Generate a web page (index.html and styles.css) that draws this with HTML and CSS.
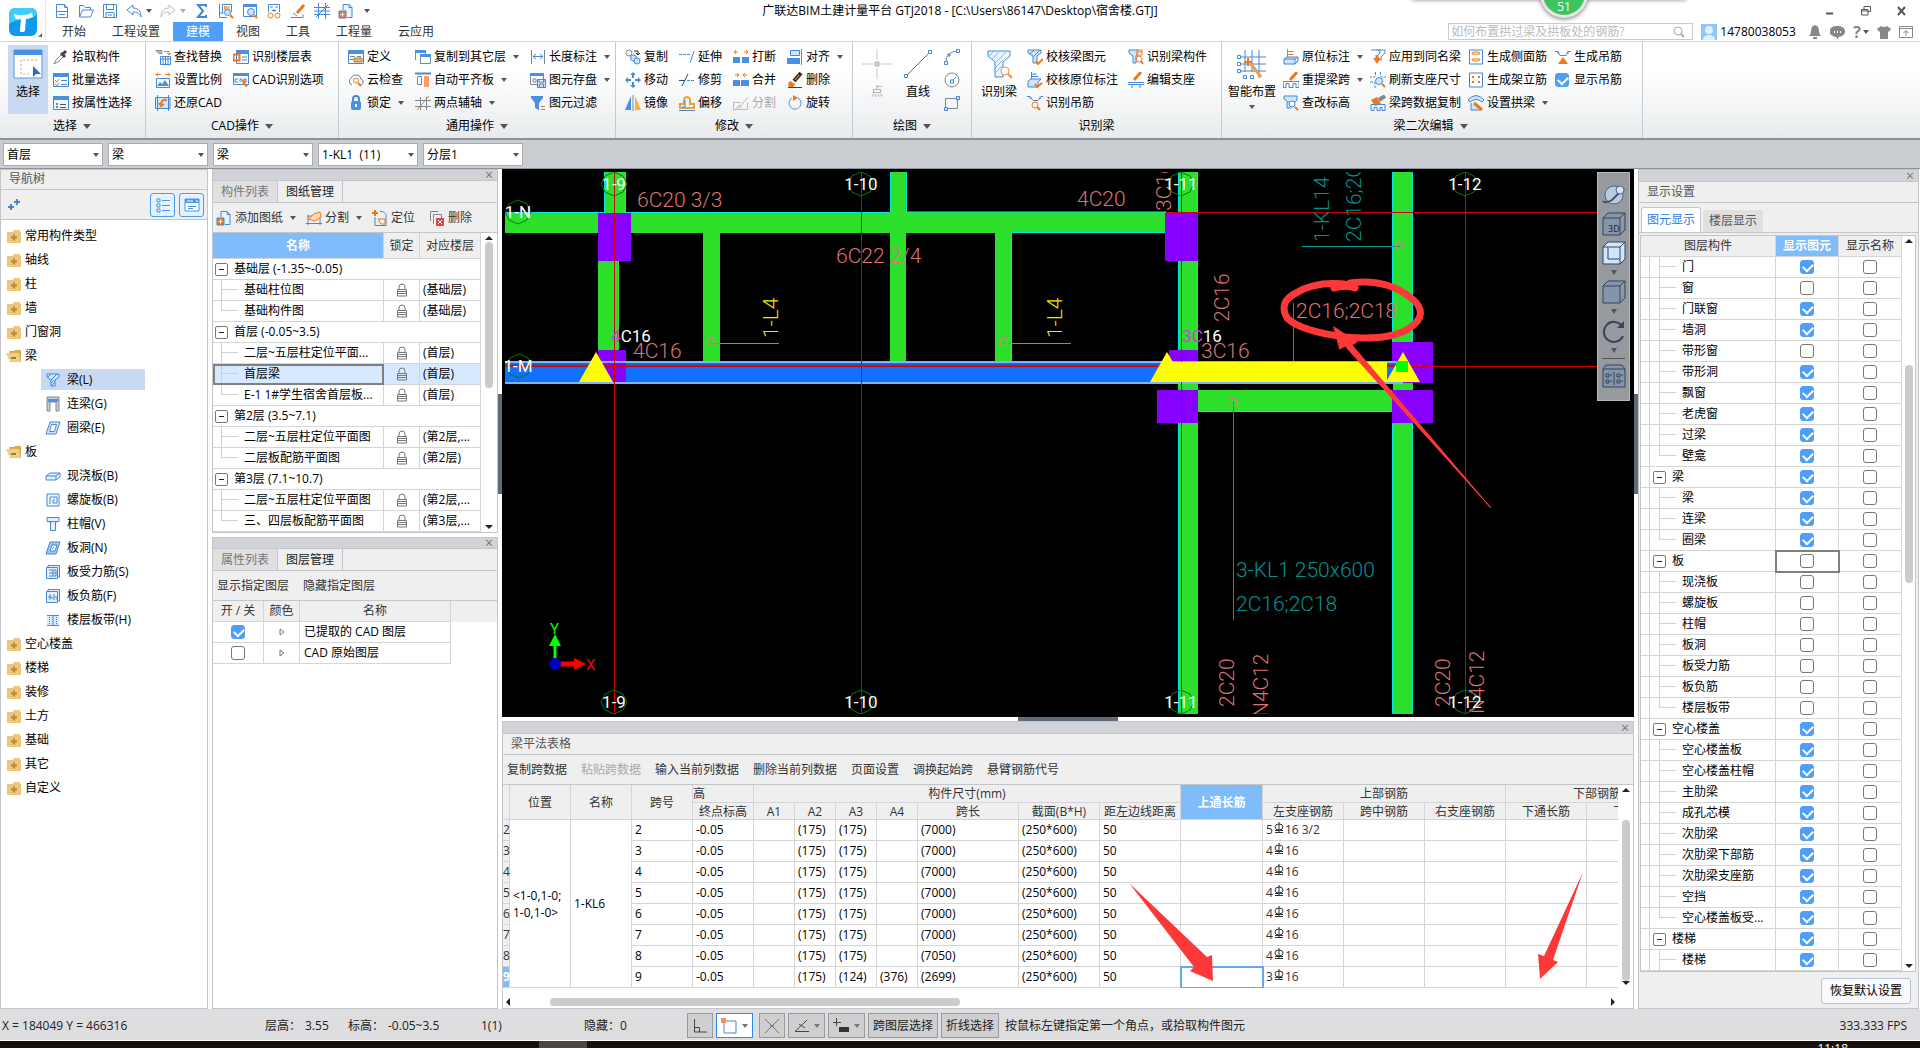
FILE: index.html
```html
<!DOCTYPE html>
<html lang="zh-CN">
<head>
  <meta charset="utf-8">
  <title>广联达BIM土建计量平台 GTJ2018</title>
  <link rel="stylesheet" href="styles.css">
</head>
<body>
  <svg class="defs" aria-hidden="true">
    <symbol id="i-lock" viewBox="0 0 12 14"><path d="M3 6V4a3 3 0 0 1 6 0v2M1.500 6.500h9v6.500h-9zM1.500 8.500h9M1.500 10.500h9" fill="none" stroke="#777"/></symbol>
    <symbol id="i-folder" viewBox="0 0 16 14"><path d="M1 3h6l1-2h6v2h1v11H1z" fill="#edc67b"/><path d="M8 5.500v6M5 8.500h6" stroke="#b98c37" stroke-width="2"/></symbol>
    <symbol id="i-open" viewBox="0 0 16 14"><path d="M3 2h5l1-1h6v12H5z" fill="#dba94d"/><path d="M0 4h13l2 9H4z" fill="#f2cd86"/><path d="M5 9h5" stroke="#a8761c" stroke-width="2"/></symbol>
    <symbol id="i-beam" viewBox="0 0 16 16"><path d="M2 2h12v3l-4 3v6H6V8L2 5zM3 5l3-3M6 8l6-6M6 11l3-3M6 14l4-4" fill="#cfe5ff" stroke="#4488d8"/></symbol>
    <symbol id="i-link" viewBox="0 0 16 16"><path d="M2 1h12v14h-3V6H5v9H2z" fill="#c8cdd3" stroke="#7d8791"/><path d="M3 3h10v3H3z" fill="#4a94ea"/></symbol>
    <symbol id="i-ring" viewBox="0 0 16 16"><path d="M5 2h10l-4 12H1zM6.500 4.500h5L9.500 11.500h-5z" fill="#cfe5ff" fill-rule="evenodd" stroke="#4488d8"/></symbol>
    <symbol id="i-slab" viewBox="0 0 16 16"><path d="M1 8l4-3h10l-4 3zM1 8v4h10V8M11 12l4-3V5" fill="#e1f0ff" stroke="#4488d8"/></symbol>
    <symbol id="i-spiral" viewBox="0 0 16 16"><path d="M2 2h12v12H2zM5 12V5h7v6H8V8h2" fill="#edf6ff" stroke="#4488d8"/></symbol>
    <symbol id="i-cap" viewBox="0 0 16 16"><path d="M2 1.500h12v4H2zM5.500 5.500v9h5v-9M4 5.500l2 2M12 5.500l-2 2" fill="#e1f0ff" stroke="#4488d8"/></symbol>
    <symbol id="i-hole" viewBox="0 0 16 16"><path d="M5 2h10l-4 12H1z" fill="#9dc6f7" stroke="#4488d8"/><path d="M7 5h5l-2 6H5zM7 9l2-2" fill="#fff" stroke="#4488d8"/></symbol>
    <symbol id="i-rebar" viewBox="0 0 16 16"><path d="M1.500 3.500h11v11h-11zM3 3V1.500h11.500V13H13M4 6h7v6H4M4 9h7M8 6v6" fill="#e4f1ff" stroke="#4488d8"/></symbol>
    <symbol id="i-neg" viewBox="0 0 16 16"><path d="M1.500 3.500h11v11h-11zM3 3V1.500h11.500V13H13M5 6v6M9 6v6M3 9h4v2M9 9h3v3" fill="#e4f1ff" stroke="#4488d8"/></symbol>
    <symbol id="i-band" viewBox="0 0 16 16"><path d="M2 3h12v11H2z" fill="#d6e9ff"/><path d="M2 3.500h12M2 13.500h12M8 3v10" fill="none" stroke="#4488d8"/><path d="M4.500 3v10M11.500 3v10" stroke="#4488d8" stroke-dasharray="1 1"/></symbol>
    <symbol id="i-bar" viewBox="0 0 12 12"><path d="M6 0v10M2 10.500h8M2 8.500h8M2 5a4 3 0 1 1 8 0a4 3 0 1 1-8 0" fill="none" stroke="#333"/></symbol>
    <symbol id="i-list" viewBox="0 0 16 16"><path d="M2 2h3v3H2zM2 7h3v3H2zM2 12h3v3H2zM7 3.500h8M7 8.500h8M7 13.500h8" fill="none" stroke="#4a96ee"/></symbol>
    <symbol id="i-panel" viewBox="0 0 16 16"><path d="M1 2h14v12H1z" fill="#fff" stroke="#4a96ee"/><path d="M1 2h14v4H1z" fill="#4a96ee"/><path d="M3 4h6M12 4h2" stroke="#fff"/><path d="M4 9.500h8M4 11.500h5" stroke="#4a96ee"/></symbol>
    <symbol id="i-adddoc" viewBox="0 0 16 16"><path d="M5 7V1.500h6l3 3v10H9M11 1.500v3h3" fill="#eaf4ff" stroke="#4488d8"/><path d="M1 8h7v7H1z" fill="#f07818"/><path d="M4.500 9.500v4M2.500 11.500h4" stroke="#fff"/></symbol>
  </svg>

  <header class="titlebar">
    <div class="logo">
      <svg width="30" height="30" viewBox="0 0 30 30"><rect x="1" y="1" width="28" height="28" rx="6" fill="#1199ee"/><path d="M1 17C9 11 22 13 29 8V7a6 6 0 0 0-6-6H7a6 6 0 0 0-6 6z" fill="#42cdf8"/><path d="M6 7q9 3 18-1l1 4q-4 2-7 2l-1 11q0 2-3 2t-2-2l1-11q-4 1-6-1z" fill="#fff"/></svg>
      <i class="corner"></i>
    </div>
    <div class="quick">
      <button aria-label="新建"><svg class="ico" viewBox="0 0 16 16"><path d="M2.500 1.500h8l3 3v10h-11zM10.500 1.500v3h3M3 8.500h10M5 11.500h6"/></svg></button>
      <button aria-label="打开"><svg class="ico" viewBox="0 0 16 16"><path d="M1.500 14V2.500h4l2 2h5V7M1.500 14l3-7h11l-3 7z"/></svg></button>
      <button aria-label="保存"><svg class="ico" viewBox="0 0 16 16"><path d="M1.500 1.500h13v13h-13zM4.500 1.500v5h7v-5M4 14.500v-5h8v5M6 12h4"/></svg></button>
      <button class="drop" aria-label="撤销"><svg class="ico" viewBox="0 0 16 16"><path d="M7 2L1 7l6 5V9c4 0 6 1 8 5c0-5-2-9-8-9z"/></svg><i class="caret"></i></button>
      <button class="drop off" aria-label="恢复"><svg class="ico" viewBox="0 0 16 16"><path d="M9 2l6 5l-6 5V9c-4 0-6 1-8 5c0-5 2-9 8-9z"/></svg><i class="caret"></i></button>
      <button aria-label="汇总"><svg class="ico" viewBox="0 0 16 16"><path d="M12 4V2H4l5 6l-5 6h8v-2" stroke-width="2"/></svg></button>
      <button aria-label="查看工程量"><svg class="ico" viewBox="0 0 16 16"><path d="M1.500 1v13.500H9M4.500 10V1.500h9V9M1.500 10h4"/><path class="o" d="M6 4h6M6 6h6M7 3v4"/><circle class="lt" cx="9.500" cy="9.500" r="3"/><path class="o" d="M12 12l3 3" stroke-width="2"/></svg></button>
      <button aria-label="查看计算式"><svg class="ico" viewBox="0 0 16 16"><path d="M1.500 1.500h13v12h-13z"/><path class="f" d="M1 1h14v3H1z"/><circle class="lt" cx="9" cy="9" r="3.500"/><path class="o" d="M12 12l3 3" stroke-width="2"/></svg></button>
      <button aria-label="表达式"><svg class="ico" viewBox="0 0 16 16"><path d="M2.500 9V1.500h11V9M4 4h3M9 4h3M8 6v3M6 7.500h4"/><circle class="o" cx="4.500" cy="12.500" r="2.500"/><circle class="o" cx="11.500" cy="12.500" r="2.500"/></svg></button>
      <button aria-label="标记"><svg class="ico" viewBox="0 0 16 16"><path class="o" d="M14 2L7 10" stroke-width="3"/><path d="M3 10l4 3M1 14.500h12v-3"/></svg></button>
      <button aria-label="轴网"><svg class="ico" viewBox="0 0 16 16"><path d="M4.500 0v16M11.500 0v16M0 4.500h16M0 11.500h16M2 14L14 2M0 8h16"/></svg></button>
      <button aria-label="添加图纸"><svg class="ico"><use href="#i-adddoc"/></svg></button>
      <button class="more" aria-label="更多"><i class="caret"></i></button>
    </div>
    <div class="app-title">广联达BIM土建计量平台 GTJ2018 - [C:\Users\86147\Desktop\宿舍楼.GTJ]</div>
    <div class="window-controls">
      <button aria-label="最小化"><svg width="12" height="12"><path d="M2 8.500h7" stroke="#555" stroke-width="2"/></svg></button>
      <button aria-label="还原"><svg width="12" height="12"><path d="M4 4V1.500h6.500v5H8M1.500 4.500H8V10H1.500zM1.500 6H8" fill="none" stroke="#555"/></svg></button>
      <button aria-label="关闭"><svg width="12" height="12"><path d="M2 2l7 8M9 2l-7 8" stroke="#555" stroke-width="2"/></svg></button>
    </div>
    <nav class="menu">
      <a href="#">开始</a><a href="#">工程设置</a><a href="#" class="active">建模</a><a href="#">视图</a><a href="#">工具</a><a href="#">工程量</a><a href="#">云应用</a>
      <div class="user">
        <label class="search"><input type="text" placeholder="如何布置拱过梁及拱板处的钢筋?" aria-label="搜索"><svg width="12" height="12"><circle cx="5" cy="5" r="4" fill="none" stroke="#aaa"/><path d="M8 8l3 3" stroke="#aaa" stroke-width="2"/></svg></label>
        <svg width="16" height="16"><path d="M0 0h16v16H0z" fill="#8fc6fb"/><circle cx="8" cy="6" r="4" fill="#dff0ff"/><path d="M2 16q0-5 6-5t6 5z" fill="#dff0ff"/></svg>
        <span class="phone">14780038053</span>
        <button aria-label="消息"><svg width="14" height="14" fill="#888"><path d="M7 0q4 1 4 6q0 3 2 5H1q2-2 2-5q0-5 4-6zM5 12h4v2H5z"/></svg></button>
        <button aria-label="反馈"><svg width="15" height="14" fill="#888"><path d="M7 1a7 5.500 0 0 1 2 11l-2 2l-1-2A7 5.500 0 0 1 7 1z"/><path d="M4 6h1v2H4zM7 6h1v2H7zM10 6h1v2h-1z" fill="#fff"/></svg></button>
        <button class="help">?<i class="caret"></i></button>
        <button aria-label="皮肤"><svg width="14" height="14" fill="#888"><path d="M4 1q3 2 6 0l4 3l-2 3l-1-1v8H3V6L2 7L0 4z"/></svg></button>
        <button aria-label="收起"><svg width="14" height="14" fill="none" stroke="#888"><path d="M.500 1.500h13v11H.500zM.500 3.500h13M7 11V6M4.500 8L7 5.500L9.500 8"/></svg></button>
      </div>
    </nav>
    <div class="bubble-bar"></div>
    <div class="bubble">51</div>
  </header>

  <section class="ribbon">
    <div class="group g-select">
      <div class="tools">
        <button class="big on"><svg width="30" height="30" viewBox="0 0 30 30"><path d="M1 1h28v28H1z" fill="#fff" stroke="#5a9ae2"/><path d="M1 1h28v5H1z" fill="#4a90e2"/><path d="M24 11H8v14h10" fill="none" stroke="#e8a33a" stroke-dasharray="2 2"/><path d="M20 17v11l3-3h5z" fill="#2f6cb8"/></svg><span>选择</span></button>
        <div class="col">
          <button><svg class="ico" viewBox="0 0 16 16"><path class="g" d="M1 15l2-4l6-6l2 2l-6 6z"/><path d="M8 4l4 4M10 5l3-3" stroke="#444" stroke-width="3"/></svg>拾取构件</button>
          <button><svg class="ico" viewBox="0 0 16 16"><path d="M.500 1.500h15v13H.500z"/><path class="f" d="M0 1h16v4H0z"/><path d="M8 8.500h6M8 12.500h6"/><path class="o" d="M2 8l2 2l2-3M2 12l2 2l2-3"/></svg>批量选择</button>
          <button><svg class="ico" viewBox="0 0 16 16"><path d="M.500 1.500h15v13H.500z"/><path class="f" d="M0 1h16v4H0zM3 8h2v2H3zM3 11h2v2H3z"/><path d="M7 9.500h6M7 12.500h6" stroke="#555"/></svg>按属性选择</button>
        </div>
      </div>
      <button class="name">选择<i class="caret"></i></button>
    </div>

    <div class="group g-cad">
      <div class="tools">
        <div class="col">
          <button><svg class="ico" viewBox="0 0 16 16"><path class="g" d="M1 1.500h6v3h-3zM3 1v3M5 1v3"/><path class="o" d="M9 2.500h5v3M12 4l2 2l2-2"/><path d="M5.500 7.500h10v8h-10zM8 8v7M10.500 8v7M13 8v7M5.500 10h10"/></svg>查找替换</button>
          <button><svg class="ico" viewBox="0 0 16 16"><path class="o" d="M1 2.500h5M3 .500l-2 2l2 2M10 2.500h5M13 .500l2 2l-2 2"/><path d="M1.500 6.500h13v9h-13z"/><path class="f" d="M2 14l3-4l2 2l3-4l4 6z"/></svg>设置比例</button>
          <button><svg class="ico" viewBox="0 0 16 16"><path class="lt" d="M2.500 0v16M.500 2.500H15v11H.500zM13.500 0v16"/><path class="o" d="M12 5q-5-1-6 4M4 8l2 3l3-2" stroke-width="2"/></svg>还原CAD</button>
        </div>
        <div class="col">
          <button><svg class="ico" viewBox="0 0 16 16"><path d="M3.500 1.500h12v13h-12z"/><path class="f" d="M3 1h13v4H3z"/><path class="o" d="M.500 5.500h6v6h-6z" stroke-width="2"/><path d="M9 8h5M9 11h5"/></svg>识别楼层表</button>
          <button><svg class="ico" viewBox="0 0 16 16"><path d="M.500 1.500h15v11H.500z"/><path class="f" d="M0 1h16v3H0z"/><path d="M5 7H2v3h3M7 10V7h2v3M11 7h2v3h-2z"/><path class="fo" d="M9 8l5 1l-2 2l3 3l-2 1l-3-3z"/></svg>CAD识别选项</button>
        </div>
      </div>
      <button class="name">CAD操作<i class="caret"></i></button>
    </div>

    <div class="group g-common">
      <div class="tools">
        <div class="col">
          <button><svg class="ico" viewBox="0 0 16 16"><path d="M.500 1.500h15v13H.500z"/><path class="f" d="M0 1h16v4H0z"/><path class="g" d="M2 7.500h5M2 10.500h5M9 7.500h4"/><path d="M6 9h8v4H6z" fill="#f5b041" stroke="#888"/></svg>定义</button>
          <button><svg class="ico" viewBox="0 0 16 16"><path d="M4 13a4 4 0 0 1-1-7q2-4 6-3q4 1 4 4q3 1 2 4q-1 2-3 2"/><circle class="o" cx="8" cy="8.500" r="2.500"/><path class="o" d="M10 11l3 3" stroke-width="2"/></svg>云检查</button>
          <button><svg class="ico" viewBox="0 0 16 16"><path d="M5 7V4a3 3 0 0 1 6 0v3" stroke-width="2"/><rect class="f" x="3" y="6" width="10" height="9" rx="2"/><path d="M8 9v3" stroke="#fff" stroke-width="2"/></svg>锁定<i class="caret"></i></button>
        </div>
        <div class="col">
          <button><svg class="ico" viewBox="0 0 16 16"><path class="g" d="M.500 11V1.500h10V5M5.500 5.500h10v9h-10z"/><path class="f" d="M0 1h11v3H0z"/><path class="f" d="M5 5h11v3H5z"/></svg>复制到其它层<i class="caret"></i></button>
          <button><svg class="ico" viewBox="0 0 16 16"><path d="M0 1.500h16" stroke-width="2"/><path class="g" d="M2.500 4.500h4v8h-4z"/><path d="M9 4h5v11H9z" fill="#ff9c66" stroke="none"/></svg>自动平齐板<i class="caret"></i></button>
          <button><svg class="ico" viewBox="0 0 16 16"><path class="g" d="M0 5.500h16M0 11.500h16M5.500 2v13M11.500 2v13"/><path class="o" d="M2 15L14 1"/></svg>两点辅轴<i class="caret"></i></button>
        </div>
        <div class="col">
          <button><svg class="ico" viewBox="0 0 16 16"><path class="g" d="M1.500 1v14M14.500 1v14"/><path d="M3 7.500h10M6 5L3 7.500L6 10M10 5l3 2.500L10 10"/></svg>长度标注<i class="caret"></i></button>
          <button><svg class="ico" viewBox="0 0 16 16"><path class="g" d="M.500 1.500h13v11H.500zM3 7h3v3H3z"/><path class="f" d="M0 1h14v3H0z"/><path class="lt" d="M7.500 7.500h8v8h-8zM9.500 15v-3h4v3M9 7.500V10h5V7.500"/></svg>图元存盘<i class="caret"></i></button>
          <button><svg class="ico" viewBox="0 0 16 16"><path class="f" d="M1 1h12v2L9 8v7l-4-2V8L1 3z"/><path class="o" d="M11 11.500h4M11 14.500h4"/></svg>图元过滤</button>
        </div>
      </div>
      <button class="name">通用操作<i class="caret"></i></button>
    </div>

    <div class="group g-modify">
      <div class="tools">
        <div class="col">
          <button><svg class="ico" viewBox="0 0 16 16"><circle class="g" cx="4" cy="4" r="3"/><path d="M9 2h4v3M11 4l2 2l2-2" stroke="#222"/><circle class="lt" cx="8.500" cy="9" r="3"/><circle class="lt" cx="12" cy="12" r="3"/></svg>复制</button>
          <button><svg class="ico" viewBox="0 0 16 16"><path class="f" d="M8 0l3 3H5zM8 16l3-3H5zM0 8l3-3v6zM16 8l-3-3v6z"/><path d="M8 2v4M8 10v4M2 8h4M10 8h4" stroke-width="2"/></svg>移动</button>
          <button><svg class="ico" viewBox="0 0 16 16"><path class="f" d="M6 1v14H0z"/><path class="g" d="M8 0v16"/><path d="M10 1v14h6z" fill="#f9b233" stroke="none"/></svg>镜像</button>
        </div>
        <div class="col">
          <button><svg class="ico" viewBox="0 0 16 16"><path d="M0 5.500h11" stroke-dasharray="3 1"/><path d="M15 2l-4 12" /></svg>延伸</button>
          <button><svg class="ico" viewBox="0 0 16 16"><path d="M0 8.500h6M3 14L9 2" stroke="#234f8a"/><path d="M8 8.500h8" stroke-dasharray="3 1"/></svg>修剪</button>
          <button><svg class="ico" viewBox="0 0 16 16"><path d="M1 13V9h4V4q3-4 6 0v5h4v4z" stroke="#f0a030" stroke-width="2"/><path d="M3 12h3V5M0 15.500h16"/></svg>偏移</button>
        </div>
        <div class="col">
          <button><svg class="ico" viewBox="0 0 16 16"><path class="o" d="M1 3h4M3 1L1 3l2 2M11 3h4M13 1l2 2l-2 2"/><path class="f" d="M0 8h7v6H0zM9 8h7v6H9z"/></svg>打断</button>
          <button><svg class="ico" viewBox="0 0 16 16"><path class="o" d="M2 3h4M4 1l2 2l-2 2M10 3h4M12 1l-2 2l2 2"/><path class="f" d="M0 8h7v6H0zM8 8h8v6H8z"/></svg>合并</button>
          <button class="off"><svg class="ico" viewBox="0 0 16 16"><path d="M.500 7.500H8M.500 7.500v7h14v-7M5 14L15 2M3 14l3-4l3 3"/></svg>分割</button>
        </div>
        <div class="col">
          <button><svg class="ico" viewBox="0 0 16 16"><path class="lt" d="M3.500 1.500h9v5h-9z"/><path class="f" d="M0 9h13v6H0z"/><path class="g" d="M14.500 0v16"/></svg>对齐<i class="caret"></i></button>
          <button><svg class="ico" viewBox="0 0 16 16"><path d="M14 1L7 9" stroke="#3d2a1c" stroke-width="4"/><path d="M12 3L8 8" stroke="#f0b060"/><path class="fo" d="M3 9l5 3l-2 3H2q-2-3 1-6z"/><path d="M1 15.500h14" stroke="#444"/></svg>删除</button>
          <button><svg class="ico" viewBox="0 0 16 16"><path d="M5 3a6 6 0 1 0 6 0" stroke="#5a96dc"/><path class="fo" d="M6 0l5 3l-5 3z"/></svg>旋转</button>
        </div>
      </div>
      <button class="name">修改<i class="caret"></i></button>
    </div>

    <div class="group g-draw">
      <div class="tools">
        <button class="big off"><svg width="30" height="30" viewBox="0 0 30 30"><path d="M15 0v11M15 19v11M0 15h11M19 15h11" stroke="#c8c8c8"/><circle cx="15" cy="15" r="3" fill="#c8c8c8"/></svg><span>点</span></button>
        <button class="big"><svg width="30" height="30" viewBox="0 0 30 30"><path d="M3 27L27 3" stroke="#667"/><path d="M1.500 25.500h3v3h-3zM25.500 1.500h3v3h-3z" fill="#fff" stroke="#4488d8"/></svg><span>直线</span></button>
        <div class="col">
          <button aria-label="弧线"><svg class="ico" viewBox="0 0 16 16"><path class="g" d="M2 13Q2 3 13 2"/><path d="M.500 12.500h3v3h-3zM12.500.500h3v3h-3zM4 5h2v2H4z"/></svg></button>
          <button aria-label="圆"><svg class="ico" viewBox="0 0 16 16"><circle class="g" cx="8" cy="8" r="7"/><path d="M6.500 8h3v3h-3zM9 8l3-3"/></svg></button>
          <button aria-label="矩形"><svg class="ico" viewBox="0 0 16 16"><path class="g" d="M1.500 3.500h12v10h-12z"/><path class="lt" d="M.500 12.500h3v3h-3zM12.500 1.500h3v3h-3z"/></svg></button>
        </div>
      </div>
      <button class="name">绘图<i class="caret"></i></button>
    </div>

    <div class="group g-find">
      <div class="tools">
        <button class="big"><svg width="30" height="30" viewBox="0 0 30 30"><path d="M4 2h22v5l-7 6v15h-8V13L4 7z" fill="#e9f4ff" stroke="#4488d8"/><path d="M5 7l5-5M8 10l8-8M11 14L23 2M11 19l8-8M11 24l8-8" stroke="#8ab8ee"/><circle cx="21" cy="22" r="4" fill="#fff" stroke="#f48a4a"/><path d="M24 25l4 4" stroke="#f48a4a" stroke-width="2"/></svg><span>识别梁</span></button>
        <div class="col">
          <button><svg class="ico" viewBox="0 0 16 16"><path class="lt" d="M1 1h13v3l-4 3v7H6V7L1 4zM3 5l4-4M6 8l7-7"/><path class="o" d="M9 12l2 3l5-5" stroke-width="2"/></svg>校核梁图元</button>
          <button><svg class="ico" viewBox="0 0 16 16"><path d="M4.500 0v7M4.500 2h5M4.500 4.500h7"/><path class="lt" d="M1 9l3-2h10l-3 3v5H1z"/><path class="o" d="M8 12l2 3l5-4" stroke-width="2"/></svg>校核原位标注</button>
          <button><svg class="ico" viewBox="0 0 16 16"><path d="M0 1.500h3l3 4h5l3-4h2M3 1.500V4M13 1.500V4"/><circle class="o" cx="8" cy="10" r="3"/><path class="o" d="M10 12l3 3" stroke-width="2"/></svg>识别吊筋</button>
        </div>
        <div class="col">
          <button><svg class="ico" viewBox="0 0 16 16"><path class="lt" d="M1 1h9v3L8 7v7H5V7L1 4z"/><path class="o" d="M9 1h5v5H9zM11 3h3"/><circle class="o" cx="11" cy="10" r="3"/><path class="o" d="M13 12l2 3" stroke-width="2"/></svg>识别梁构件</button>
          <button><svg class="ico" viewBox="0 0 16 16"><path class="o" d="M13 0L6 8" stroke-width="3"/><path d="M0 10.500h16M0 12.500h16M4 12v4M12 12v4"/></svg>编辑支座</button>
        </div>
      </div>
      <button class="name">识别梁</button>
    </div>

    <div class="group g-edit">
      <div class="tools">
        <button class="big wide"><svg width="30" height="30" viewBox="0 0 30 30"><path d="M8 1v22M15 1v22M22 1v28M2 8h27M2 15h27M2 22h27" stroke="#4488d8"/><path d="M.500 6.500h3v3h-3zM.500 13.500h3v3h-3zM.500 20.500h3v3h-3zM6.500 26.500h3v3h-3zM13.500 26.500h3v3h-3z" fill="#fff" stroke="#4488d8"/><path d="M14 15l10 13" stroke="#e8a050" stroke-width="3"/><path d="M11 9v8M7 13h8" stroke="#f07818" stroke-width="2"/></svg><span>智能布置</span><i class="caret"></i></button>
        <div class="col">
          <button><svg class="ico" viewBox="0 0 16 16"><path class="o" d="M4.500 0v8M4.500 2.500h6M4.500 5.500h6"/><path class="lt" d="M1 10l3-2h11l-3 2zM1 10v5h11v-5M12 15l3-3V8"/></svg>原位标注<i class="caret"></i></button>
          <button><svg class="ico" viewBox="0 0 16 16"><path class="o" d="M14 0L7 8" stroke-width="3"/><path d="M0 9.500h16v6h-3v-4h-3v4H6v-4H3v4H.500z"/></svg>重提梁跨<i class="caret"></i></button>
          <button><svg class="ico" viewBox="0 0 16 16"><path class="lt" d="M1 1h13v4l-2 2H5L1 4zM4 7v6h4"/><circle cx="9" cy="9" r="3" fill="#fff"/><path class="o" d="M12 12l3 3" stroke-width="2"/></svg>查改标高</button>
        </div>
        <div class="col">
          <button><svg class="ico" viewBox="0 0 16 16"><path d="M1 1h9v3L7 7M7 1h8v3l-4 4v4"/><path class="fo" d="M3 9h8l-4 6z"/><path class="o" d="M7 6v4" stroke-width="3"/></svg>应用到同名梁</button>
          <button><svg class="ico" viewBox="0 0 16 16"><path d="M5.500 0v4l-1 1H0M10.500 0v4l1 1H16M0 10h4l1 1v5" stroke-dasharray="3 1"/><circle class="lt" cx="9" cy="9" r="3.500"/><path class="o" d="M12 12l3 3" stroke-width="2"/></svg>刷新支座尺寸</button>
          <button><svg class="ico" viewBox="0 0 16 16"><path class="fo" d="M1 5l6-3l4 7l-6 2z"/><path d="M9 5l6-4" stroke="#888" stroke-width="4"/><path d="M1 9.500h14v6h-3v-3h-2v3H7v-3H4v3H1z"/></svg>梁跨数据复制</button>
        </div>
        <div class="col">
          <button><svg class="ico" viewBox="0 0 16 16"><path d="M1.500 1h13v14h-13z"/><path class="o" d="M4 5q0-2 2-2h4q2 0 2 2M4 10q0 2 2 2h4q2 0 2-2M4 5h8M4 10h8"/></svg>生成侧面筋</button>
          <button><svg class="ico" viewBox="0 0 16 16"><path d="M1.500 1h13v14h-13z"/><path class="fo" d="M4 4h2v2H4zM10 4h2v2h-2zM4 9h2v2H4zM10 9h2v2h-2z"/></svg>生成架立筋</button>
          <button><svg class="ico" viewBox="0 0 16 16"><path class="lt" d="M0 5q8-9 16 0l-2 2q-6-5-12 0zM3 8v7h10"/><path class="o" d="M6 8l8 7" stroke-width="3"/></svg>设置拱梁<i class="caret"></i></button>
        </div>
        <div class="col">
          <button><svg class="ico" viewBox="0 0 16 16"><path d="M0 2.500h3l2 4h6l2-4h3M3 2v3M13 2v3"/><path class="fo" d="M8 8l5 7H3z"/></svg>生成吊筋</button>
          <label class="show"><input type="checkbox" checked>显示吊筋</label>
        </div>
      </div>
      <button class="name">梁二次编辑<i class="caret"></i></button>
    </div>
  </section>

  <section class="context">
    <label><select aria-label="楼层"><option>首层</option></select></label>
    <label><select aria-label="构件大类"><option>梁</option></select></label>
    <label><select aria-label="构件类型"><option>梁</option></select></label>
    <label><select aria-label="构件"><option>1-KL1&nbsp; (11)</option></select></label>
    <label><select aria-label="分层"><option>分层1</option></select></label>
  </section>

  <main class="workspace">
    <aside class="panel nav">
      <h2>导航树</h2>
      <div class="nav-tools">
        <svg width="14" height="12"><path d="M4 5v6M1 8h6M10 0v6M7 3h6" stroke="#4488d8" stroke-width="2"/></svg>
        <button aria-label="列表"><svg width="16" height="16"><use href="#i-list"/></svg></button>
        <button aria-label="面板"><svg width="16" height="16"><use href="#i-panel"/></svg></button>
      </div>
      <ul class="tree" id="nav-tree"></ul>
    </aside>

    <div class="middle">
      <section class="panel drawings">
        <div class="strip"><button aria-label="关闭">×</button></div>
        <div class="tabs"><button>构件列表</button><button class="active">图纸管理</button></div>
        <div class="tools-row">
          <button><svg class="ico"><use href="#i-adddoc"/></svg>添加图纸<i class="caret"></i></button>
          <button><svg class="ico" viewBox="0 0 16 16"><path class="lt" d="M2 5v10M0 13.500h16M14 5v10M1 6h13"/><path d="M2 9l6-5l6-2l1 5l-6 4z" fill="#ffd6b0" stroke="#f07818"/></svg>分割<i class="caret"></i></button>
          <button class="sp"><svg class="ico" viewBox="0 0 16 16"><path d="M3 7v8.500h11v-11l-3-3H8"/><path class="o" d="M3 0v6M0 3h6" stroke-width="2"/><path class="o" d="M6 9h7v5H9z"/></svg>定位</button>
          <button class="sp"><svg class="ico" viewBox="0 0 16 16"><path class="g" d="M1.500 11V1.500h8M4.500 14V4.500h8V8"/><path d="M7 8h8v8H7z" fill="#d84c4c" stroke="none"/><path d="M9 10l4 4M13 10l-4 4" stroke="#fff"/></svg>删除</button>
        </div>
        <div class="scroll-box">
          <table class="grid drawing-table">
            <colgroup><col><col class="w-lock"><col class="w-floor"></colgroup>
            <thead><tr><th class="picked">名称</th><th>锁定</th><th>对应楼层</th></tr></thead>
            <tbody id="drawing-rows"></tbody>
          </table>
          <div class="vbar"><i class="up"></i><i class="thumb"></i><i class="down"></i></div>
        </div>
      </section>

      <section class="panel layers">
        <div class="strip"><button aria-label="关闭">×</button></div>
        <div class="tabs"><button>属性列表</button><button class="active">图层管理</button></div>
        <div class="tools-row plain"><button>显示指定图层</button><button>隐藏指定图层</button></div>
        <div class="layer-body">
          <table class="grid layer-table">
            <colgroup><col class="w-on"><col class="w-color"><col></colgroup>
            <thead><tr><th>开 / 关</th><th>颜色</th><th>名称</th></tr></thead>
            <tbody>
              <tr><td class="mid"><input type="checkbox" checked aria-label="已提取的 CAD 图层"></td><td class="mid"><svg width="6" height="8"><path d="M1 1l4 3l-4 3z" fill="none" stroke="#777"/></svg></td><td>已提取的 CAD 图层</td></tr>
              <tr><td class="mid"><input type="checkbox" aria-label="CAD 原始图层"></td><td class="mid"><svg width="6" height="8"><path d="M1 1l4 3l-4 3z" fill="none" stroke="#777"/></svg></td><td>CAD 原始图层</td></tr>
            </tbody>
          </table>
        </div>
      </section>
      <i class="grip left"></i>
    </div>

    <div class="center">
      <div class="canvas">
        <svg class="plan" viewBox="502 169 1132 548" preserveAspectRatio="xMinYMin slice">
          <defs><clipPath id="view"><path d="M505 172h1125v542H505z"/></clipPath></defs>
          <g clip-path="url(#view)">
            <g class="beam">
              <path d="M604 172h21v41h-21zM505 212h661v21H505zM598 261h21v101h-21zM703 233h17v129h-17zM890 172h16v190h-16zM995 233h17v129h-17z"/>
              <path d="M1178 172h20v542h-20zM1393 172h20v542h-20zM1198 390h195v21h-195z"/>
            </g>
            <path d="M505 212.500h99M625.500 172v40M604.500 172v40M625 212.500h265M890.500 172v40M906.500 172v40h260M1011.500 362V232.500h154M1178.500 172v40M1197.500 172v190M1178.500 261v89M1392.500 172v170M1412.500 172v170M1198 411.500h194M1178.500 423v291M1392.500 423v291M1412.500 423v291" class="edge"/>
            <g class="column">
              <path d="M598 213h33v48h-33zM598 350h28v33h-28zM1165 213h33v48h-33zM1169 350h29v13h-29zM1157 390h41v33h-41zM1392 342h41v41h-41zM1392 390h41v33h-41z"/>
            </g>
            <path d="M505 362h897v21H505z" fill="#1170ff"/>
            <path d="M505 364h897v2H505z" fill="#1d58b8"/>
            <path d="M505 362h897M505 383h897v-12" fill="none" stroke="#7db4ff" stroke-width="2"/>
            <path d="M598 363h28v19h-28z" class="column"/>
            <path d="M614.500 172v542M861.500 172v542M1181.500 172v542M1465.500 172v542M1166 212.500h464M505 366.500h1125" class="axis"/>
            <g class="yellow">
              <path d="M579 382l17-30l17 30zM1150 382l17-30l6 10h214v20zM1386 382l17-30l17 30z"/>
            </g>
            <path d="M1396 361h12v11h-12z" fill="#0f0"/>
            <g class="leader">
              <path d="M711 343.500h68M1004 343.500h67" stroke="#9a9a00"/>
              <path d="M1302 246.500h98M1233.500 402v218" stroke="#009a9a"/>
              <path d="M1293.500 303v58" stroke="#a85858"/>
              <circle cx="711" cy="342" r="4"/><circle cx="1004" cy="342" r="4"/><circle cx="1400" cy="246" r="4"/><circle cx="1233" cy="402" r="4"/>
            </g>
            <g class="cad pink">
              <text x="637" y="207">6C20 3/3</text>
              <text x="1077" y="206">4C20</text>
              <text x="836" y="263">6C22 2/4</text>
              <text x="633" y="358">4C16</text>
              <text x="1201" y="358">3C16</text>
              <text x="1296" y="318">2C16;2C18</text>
              <text transform="translate(1171 211) rotate(-90)">3C16</text>
              <text transform="translate(1229 322) rotate(-90)">2C16</text>
              <text transform="translate(1234 707) rotate(-90)">2C20</text>
              <text transform="translate(1268 717) rotate(-90)">N4C12</text>
              <text transform="translate(1450 707) rotate(-90)">2C20</text>
              <text transform="translate(1484 714) rotate(-90)">N4C12</text>
            </g>
            <g class="cad teal">
              <text transform="translate(1329 242) rotate(-90)">1-KL14</text>
              <text transform="translate(1361 242) rotate(-90)">2C16;2C18</text>
              <text x="1236" y="577">3-KL1 250x600</text>
              <text x="1236" y="611">2C16;2C18</text>
            </g>
            <g class="cad gold">
              <text transform="translate(778 338) rotate(-90)">1-L4</text>
              <text transform="translate(1062 338) rotate(-90)">1-L4</text>
            </g>
            <g class="hex">
              <path id="hex" d="M614 172l9 4l4 8l-4 8l-9 4l-9-4l-4-8l4-8z"/>
              <use href="#hex" x="247"/><use href="#hex" x="567"/><use href="#hex" x="851"/>
              <use href="#hex" x="-96" y="28"/><use href="#hex" x="-95" y="182"/>
              <use href="#hex" y="518"/><use href="#hex" x="247" y="518"/><use href="#hex" x="567" y="518"/><use href="#hex" x="851" y="518"/>
            </g>
            <g class="label">
              <text x="614" y="190">1-9</text><text x="861" y="190">1-10</text><text x="1181" y="190">1-11</text><text x="1465" y="190">1-12</text>
              <text x="518" y="218">1-N</text><text x="518" y="372">1-M</text>
              <text x="614" y="708">1-9</text><text x="861" y="708">1-10</text><text x="1181" y="708">1-11</text><text x="1465" y="708">1-12</text>
              <text x="631" y="342"><tspan fill="#d23ae0">4</tspan>C16</text>
              <text x="1202" y="342"><tspan fill="#d23ae0">3C</tspan>16</text>
            </g>
            <path d="M555 660v-16" stroke="#0f0" stroke-width="3"/><path d="M555 634l6 12h-12z" fill="#0f0"/>
            <path d="M560 664h15" stroke="red" stroke-width="5"/><path d="M586 664l-12-6v12z" fill="red"/>
            <circle cx="555" cy="664" r="6" fill="#0000c0"/>
            <text x="550" y="634" class="gizmo" fill="#0f0">Y</text><text x="586" y="670" class="gizmo" fill="red">X</text>
          </g>
          <g class="mark">
            <path d="M1355 288Q1345 285 1334 288M1350 283Q1385 278 1410 297Q1432 314 1408 329Q1388 341 1345 337Q1300 331 1287 318Q1278 302 1296 293Q1318 280 1350 285"/>
            <path class="arrow" d="M1334 327l23 15l-5 3L1491 508L1345 346l-5 3z"/>
          </g>
        </svg>
        <div class="view-tools">
          <button aria-label="动态观察"><svg width="24" height="24"><circle cx="12" cy="12" r="9" fill="#b8cbe0" stroke="#56677a"/><path d="M1 18q2 3 9-1L22 5" fill="none" stroke="#3f5166" stroke-width="2"/><circle cx="18" cy="7" r="4" fill="#d6e4f2" stroke="#56677a"/></svg></button>
          <button aria-label="三维"><svg width="24" height="24" class="cube"><path d="M1 6h17v17H1zM1 6l5-5h17l-5 5M23 1v17l-5 5"/><text x="6" y="20">3D</text></svg></button>
          <button aria-label="线框"><svg width="24" height="24" class="cube light"><path d="M1 6l5-5h17v17l-5 5H1zM1 6h17v17M18 6l5-5"/><path d="M6 6v12h12" /></svg></button>
          <i class="caret"></i>
          <button aria-label="实体"><svg width="24" height="24" class="cube"><path d="M1 6h17v17H1zM1 6l5-5h17l-5 5M23 1v17l-5 5"/></svg></button>
          <i class="caret"></i>
          <button aria-label="旋转"><svg width="24" height="24"><path d="M20 7a10 10 0 1 0 1 10" fill="none" stroke="#33455a" stroke-width="2"/><path d="M22 2v7h-7z" fill="#33455a"/></svg></button>
          <i class="caret"></i>
          <hr>
          <button aria-label="图层"><svg width="24" height="24" class="cube"><path d="M1 5l3-4h16l3 4v18H1zM1 5h22M12 8v13"/><path d="M4 10h3v3H4zM4 16h3v3H4zM15 10h3v3h-3zM15 16h3v3h-3zM8 11h2M8 17h2M19 11h2M19 17h2"/></svg></button>
        </div>
      </div>
      <i class="grip bottom"></i>

      <section class="panel beam-panel">
        <div class="strip"><button aria-label="关闭">×</button></div>
        <h2>梁平法表格</h2>
        <div class="tools-row plain"><button>复制跨数据</button><button class="off">粘贴跨数据</button><button>输入当前列数据</button><button>删除当前列数据</button><button>页面设置</button><button>调换起始跨</button><button>悬臂钢筋代号</button></div>
        <div class="scroll-box">
          <div class="beam-view">
            <table class="grid beam-table">
              <colgroup id="beam-cols"></colgroup>
              <thead>
                <tr><th rowspan="2" class="num"></th><th rowspan="2">位置</th><th rowspan="2">名称</th><th rowspan="2">跨号</th><th class="cut">高</th><th colspan="7">构件尺寸(mm)</th><th rowspan="2" class="picked">上通长筋</th><th colspan="3">上部钢筋</th><th colspan="2">下部钢筋</th></tr>
                <tr><th>终点标高</th><th>A1</th><th>A2</th><th>A3</th><th>A4</th><th>跨长</th><th>截面(B*H)</th><th>距左边线距离</th><th>左支座钢筋</th><th>跨中钢筋</th><th>右支座钢筋</th><th>下通长筋</th><th>下部钢筋</th></tr>
              </thead>
              <tbody id="beam-rows"></tbody>
            </table>
          </div>
          <div class="vbar"><i class="up"></i><i class="thumb"></i><i class="down"></i></div>
        </div>
        <div class="hbar"><i class="left"></i><i class="thumb"></i><i class="right"></i></div>
        <svg class="notes"><path d="M626 161L704 235l5-2l1 26l-23-10l4-4zM1080 150l-30 88l5 2l-18 17l-2-25l6 2z"/></svg>
      </section>
      <i class="grip right"></i>
    </div>

    <aside class="panel display">
      <div class="strip"><button aria-label="关闭">×</button></div>
      <h2>显示设置</h2>
      <div class="card-tabs"><button class="active">图元显示</button><button>楼层显示</button></div>
      <div class="scroll-box">
        <table class="grid display-table">
          <colgroup><col><col class="w-show"><col class="w-show"></colgroup>
          <thead><tr><th>图层构件</th><th class="picked">显示图元</th><th>显示名称</th></tr></thead>
          <tbody id="display-rows"></tbody>
        </table>
        <div class="vbar"><i class="up"></i><i class="thumb"></i><i class="down"></i></div>
      </div>
      <div class="foot"><button>恢复默认设置</button></div>
    </aside>
  </main>

  <footer class="status">
    <span class="s-pos">X = 184049 Y = 466316</span>
    <span class="s-floor">层高：</span><span class="s-h">3.55</span><span class="s-lv">标高：</span><span class="s-r">-0.05~3.5</span><span class="s-n">1(1)</span><span class="s-hide">隐藏：</span><span class="s-zero">0</span>
    <div class="snap">
      <button aria-label="正交"><svg width="16" height="16"><path d="M2.500 1v13H15M2.500 9.500h5V14" fill="none" stroke="#444"/></svg></button>
      <button class="blue" aria-label="矩形选择"><svg width="16" height="16"><path d="M3 3h12v12H3z" fill="#fff" stroke="#4488d8"/><path d="M0 0h5v5H0z" fill="#f59452"/></svg><i class="caret"></i></button>
      <button aria-label="交点" class="dim"><svg width="16" height="16"><path d="M1 1l14 14M15 1L1 15M6 8h4" stroke="#777"/></svg></button>
      <button aria-label="极轴"><svg width="16" height="16"><path d="M14 2L2 13.500h14M6 6l6 4" fill="none" stroke="#444"/></svg><i class="caret"></i></button>
      <button aria-label="动态输入"><svg width="16" height="16"><path d="M3.500 0v8M0 4.500h8" stroke="#444"/><path d="M6 9h10v5H6z" fill="#333"/></svg><i class="caret"></i></button>
      <button>跨图层选择</button>
      <button>折线选择</button>
    </div>
    <span class="hint">按鼠标左键指定第一个角点，或拾取构件图元</span>
    <span class="fps">333.333 FPS</span>
  </footer>
  <div class="taskbar"><i class="task"></i><span>11:18</span></div>
  <script src="script.js"></script>
</body>
</html>
```
FILE: styles.css
```css
* {
  box-sizing: border-box;
}
html, body {
  height: 100%;
}
body {
  margin: 0;
  display: flex;
  flex-direction: column;
  overflow: hidden;
  background: #fff;
  color: #000;
  font: 12px/16px "Open Sans", "Noto Sans CJK SC", sans-serif;
}
button, input, select {
  font: inherit;
  color: inherit;
}
button {
  display: inline-flex;
  align-items: center;
  margin: 0;
  padding: 0;
  border: 0;
  background: none;
  white-space: nowrap;
}
input[type="checkbox"] {
  appearance: none;
  display: block;
  flex: none;
  width: 14px;
  height: 14px;
  margin: 0;
  border: 1px solid #777;
  border-radius: 3px;
  background: #fff;
}
input[type="checkbox"]:checked {
  border-color: #4f9ffa;
  background: #4f9ffa;
}
input[type="checkbox"]:checked::after {
  content: "";
  display: block;
  width: 8px;
  height: 5px;
  margin: 2px;
  border: 2px solid #fff;
  border-top: 0;
  border-right: 0;
  transform: rotate(-45deg);
}
svg {
  display: block;
  flex: none;
}
.defs {
  position: absolute;
  width: 0;
  height: 0;
}
h2 {
  margin: 0;
  font-size: 12px;
  font-weight: normal;
}
.ico {
  width: 16px;
  height: 16px;
  fill: none;
  stroke: #4488d8;
}
.ico .o { stroke: #f07818; }
.ico .g { stroke: #7b8794; }
.ico .f { fill: #4a90e2; stroke: none; }
.ico .fo { fill: #f07818; stroke: none; }
.ico .lt { fill: #cfe5ff; }
.caret {
  flex: none;
  border: 3px solid transparent;
  border-top: 4px solid #555;
  border-bottom: 0;
}
.off {
  color: #aaa;
}
.off .ico {
  stroke: #bbb;
}
.off .caret {
  border-top-color: #aaa;
}

/* title bar */
.titlebar {
  position: relative;
  flex: none;
  display: grid;
  grid-template-columns: 1fr auto 1fr;
  grid-template-rows: 22px 19px;
  border-bottom: 1px solid #d5d6d8;
}
.logo {
  grid-column: 1;
  grid-row: 1 / 3;
  justify-self: start;
  display: flex;
  align-items: flex-end;
  width: 46px;
  padding: 0 0 4px 8px;
  border-right: 1px solid #e3e5e8;
}
.corner {
  border: 2px solid #666;
  border-top-color: transparent;
  border-left-color: transparent;
}
.quick {
  grid-column: 1;
  grid-row: 1;
  display: flex;
  align-items: center;
  gap: 8px;
  padding-left: 54px;
}
.quick .drop {
  gap: 4px;
}
.quick .more .caret {
  margin-left: 2px;
}
.app-title {
  grid-column: 2;
  grid-row: 1;
  line-height: 22px;
}
.window-controls {
  grid-column: 3;
  grid-row: 1;
  display: flex;
  justify-content: flex-end;
  gap: 24px;
  padding-right: 12px;
}
.menu {
  grid-column: 1 / 4;
  grid-row: 2;
  display: flex;
  padding-left: 49px;
  line-height: 20px;
}
.menu a {
  padding: 0 13px;
  color: #333;
  text-decoration: none;
}
.menu a.active {
  color: #fff;
  background: #4f9ffa;
}
.user {
  display: flex;
  align-items: center;
  gap: 8px;
  margin-left: auto;
  padding-right: 7px;
}
.search {
  display: flex;
  align-items: center;
  width: 245px;
  height: 17px;
  padding: 0 7px 0 2px;
  border: 1px solid #ccc;
}
.search input {
  flex: 1;
  min-width: 0;
  padding: 0;
  border: 0;
  outline: 0;
  height: 15px;
}
.search input::placeholder {
  color: #bbb;
}
.phone {
  width: 80px;
  margin-left: -5px;
}
.help {
  gap: 2px;
  color: #888;
  font-size: 16px;
  font-weight: bold;
}
.bubble-bar {
  position: absolute;
  top: -4px;
  right: 234px;
  width: 274px;
  height: 4px;
  box-shadow: 0 0 4px #888;
}
.bubble {
  position: absolute;
  top: -30px;
  right: 332px;
  width: 48px;
  height: 48px;
  padding-top: 26px;
  border: 3px solid #e6e6e6;
  border-radius: 50%;
  background: #3fc360;
  box-shadow: 0 1px 4px #777;
  color: #fff;
  text-align: center;
}

/* ribbon */
.ribbon {
  flex: none;
  display: flex;
  height: 98px;
  border-bottom: 2px solid #8d9195;
  background: linear-gradient(#fff 30%, #e8ebed);
}
.group {
  display: flex;
  flex-direction: column;
  flex: none;
  padding: 3px 0 0 9px;
  border-right: 1px solid #c6cacd;
}
.g-select { width: 146px; padding-left: 8px; }
.g-cad { width: 193px; }
.g-common { width: 277px; }
.g-modify { width: 237px; }
.g-draw { width: 119px; }
.g-find { width: 250px; }
.g-edit { width: 421px; padding-left: 6px; }
.tools {
  display: flex;
  gap: 11px;
}
.g-select .tools { gap: 5px; }
.g-find .tools { gap: 10px; }
.g-edit .tools { gap: 7px; }
.col {
  display: flex;
  flex-direction: column;
}
.col button, .show {
  height: 23px;
  gap: 3px;
}
.col .caret {
  margin-left: 4px;
}
.show {
  display: flex;
  align-items: center;
}
.show input {
  margin-right: 2px;
}
.big {
  flex-direction: column;
  gap: 5px;
  width: 30px;
  height: 69px;
  padding-top: 4px;
}
.big.on {
  width: 40px;
  background: #c9d9f1;
}
.g-find .big { width: 36px; }
.big.wide { width: 48px; }
.name {
  flex: 1;
  justify-content: center;
  gap: 6px;
  margin-left: -9px;
}
.name .caret {
  border-width: 5px 4px 0;
}

/* drop-downs under the ribbon */
.context {
  flex: none;
  display: flex;
  gap: 5px;
  height: 29px;
  padding: 3px;
  border-bottom: 1px solid #8e9196;
  background: #c9ccd1;
}
.context label {
  display: flex;
  align-items: center;
  width: 100px;
  height: 23px;
  padding-right: 3px;
  border: 1px solid #a9abae;
  background: #fff;
}
.context label::after {
  content: "";
  border: 3px solid transparent;
  border-top: 4px solid #555;
  border-bottom: 0;
}
.context select {
  flex: 1;
  appearance: none;
  padding: 0 3px;
  border: 0;
  outline: 0;
  background: none;
}

/* main area */
.workspace {
  flex: 1;
  min-height: 0;
  display: grid;
  grid-template-columns: 208px 286px 1fr 281px;
  gap: 4px;
  padding: 0 1px 0 0;
}
.panel {
  border: 1px solid #c3c5c9;
  background: #efefef;
}
.panel h2 {
  height: 21px;
  padding-left: 8px;
  border-bottom: 1px solid #c3c5c9;
  color: #555;
  line-height: 20px;
}
.nav h2 {
  height: 20px;
  line-height: 18px;
}
.strip {
  display: flex;
  justify-content: flex-end;
  height: 11px;
  padding-right: 4px;
  border-bottom: 1px solid #c3c5c9;
  background: #d2d3d8;
}
.beam-panel .strip, .display .strip {
  height: 12px;
}
.strip button {
  color: #777;
  font-size: 14px;
  line-height: 10px;
}
.nav {
  display: flex;
  flex-direction: column;
}
.nav-tools {
  display: flex;
  align-items: center;
  gap: 4px;
  height: 30px;
  padding: 0 3px 0 6px;
  border-bottom: 1px solid #c3c5c9;
}
.nav-tools > svg {
  margin-right: auto;
}
.nav-tools button {
  justify-content: center;
  width: 25px;
  height: 24px;
  border: 1px solid #4a9cf0;
  border-radius: 3px;
  background: #e6f2fd;
}
.tree {
  flex: 1;
  margin: 0;
  padding: 4px 0 0;
  background: #fff;
  list-style: none;
}
.tree li {
  display: flex;
  align-items: center;
  gap: 3px;
  height: 24px;
  padding-left: 5px;
}
.tree .leaf {
  gap: 6px;
  padding-left: 44px;
}
.tree .current {
  background: linear-gradient(#c9d9f1, #c9d9f1) 40px 1px / 104px 21px no-repeat;
}
.middle {
  position: relative;
  display: flex;
  flex-direction: column;
  gap: 4px;
  min-height: 0;
}
.layers {
  flex: 1;
  display: flex;
  flex-direction: column;
}
.tabs {
  display: flex;
  height: 22px;
  border-bottom: 1px solid #c3c5c9;
}
.tabs button {
  padding: 0 8px;
  border-right: 1px solid #c3c5c9;
  background: #e0e0e0;
  color: #777;
}
.tabs .active {
  background: #efefef;
  color: #222;
}
.tools-row {
  display: flex;
  align-items: center;
  gap: 10px;
  height: 30px;
  padding-left: 3px;
  border-bottom: 1px solid #c3c5c9;
  color: #333;
}
.tools-row button {
  gap: 3px;
}
.tools-row .caret {
  margin-left: 4px;
}
.tools-row .sp {
  margin-right: 4px;
}
.tools-row.plain {
  gap: 14px;
  padding-left: 4px;
}
.tools-row .off {
  color: #aaa;
}
.scroll-box {
  display: flex;
  background: #fff;
}
.grid {
  table-layout: fixed;
  border-spacing: 0;
}
.grid th, .grid td {
  height: 21px;
  padding: 0;
  border-right: 1px solid #d5d5d5;
  border-bottom: 1px solid #d5d5d5;
  font-weight: normal;
  white-space: nowrap;
}
.grid th {
  background: #efefef;
  color: #333;
}
.grid th.picked {
  background: #80bcfb;
  color: #fff;
  font-weight: bold;
}
.grid td {
  background: #fff;
}
.mid {
  text-align: center;
}
.mid svg, .mid input[type="checkbox"] {
  margin: 0 auto;
}
.cell {
  display: flex;
  align-items: center;
  height: 20px;
}
.branch {
  flex: none;
  width: 31px;
  height: 20px;
  background: linear-gradient(#d0d0d0, #d0d0d0) 8px 0 / 1px 20px no-repeat, linear-gradient(#d0d0d0, #d0d0d0) 8px 9px / 17px 1px no-repeat;
}
.branch.last {
  background-size: 1px 10px, 17px 1px;
}
.rail {
  flex: none;
  width: 10px;
  height: 20px;
  background: linear-gradient(#d0d0d0, #d0d0d0) 8px 0 / 1px 20px no-repeat;
}
.toggle {
  flex: none;
  justify-content: center;
  width: 13px;
  height: 13px;
  margin: 0 6px 0 2px;
  border: 1px solid #777;
  border-radius: 2px;
  background: #fff;
}
.toggle::after {
  content: "";
  width: 5px;
  height: 1px;
  background: #222;
}
.vbar {
  flex: 1;
  display: flex;
  flex-direction: column;
  align-items: center;
  padding: 3px 0;
  background: #fff;
}
.vbar .thumb, .hbar .thumb {
  border-radius: 4px;
  background: #cbcbcb;
}
.vbar .thumb {
  width: 8px;
}
.up, .down {
  border: 4px solid transparent;
}
.up {
  border-top: 0;
  border-bottom-color: #222;
}
.down {
  margin-top: auto;
  border-bottom: 0;
  border-top-color: #222;
}

/* drawings and layers */
.drawing-table { width: 268px; }
.w-lock { width: 36px; }
.w-floor { width: 61px; }
.drawing-table th { height: 26px; }
.drawing-table td:nth-child(3) { padding-left: 3px; }
.drawings .thumb {
  height: 146px;
  margin-top: 2px;
}
.drawings .cell {
  overflow: hidden;
}
.drawing-table .current td {
  background: #d6e9ff;
}
.drawing-table .current td:first-child {
  outline: 2px solid #808080;
  outline-offset: -2px;
}
.layer-body {
  flex: 1;
  background: linear-gradient(#efefef 21px, #fff 21px);
}
.layer-table { width: 238px; }
.w-on { width: 51px; }
.w-color { width: 36px; }
.layer-table td:last-child { padding-left: 4px; }

/* drawing area */
.center {
  position: relative;
  display: flex;
  flex-direction: column;
  gap: 4px;
  min-width: 0;
  min-height: 0;
}
.canvas {
  position: relative;
  flex: 1;
  min-height: 0;
  background: #000;
}
.plan {
  width: 100%;
  height: 100%;
}
.beam { fill: #2bdf2b; }
.edge { fill: none; stroke: #00e6e6; }
.column { fill: #8800ff; }
.axis { stroke: #d00000; }
.yellow { fill: #ff0; }
.leader { fill: none; stroke: #e87c7c; }
.cad {
  font-family: "Roboto", sans-serif;
  font-size: 21px;
  font-weight: 300;
}
.pink { fill: #dd7474; }
.teal { fill: #009494; }
.gold { fill: #e8e800; }
.hex { fill: none; stroke: #0a7a0a; }
.label {
  fill: #fff;
  font: 17px "Roboto", sans-serif;
  text-anchor: middle;
}
.gizmo {
  font: 15px "Roboto", sans-serif;
}
.mark path {
  fill: none;
  stroke: #fd3838;
  stroke-width: 7;
  stroke-linecap: round;
}
.mark .arrow {
  fill: #fd3838;
  stroke-width: 1;
}
.view-tools {
  position: absolute;
  top: 3px;
  right: 4px;
  display: flex;
  flex-direction: column;
  align-items: center;
  gap: 5px;
  padding: 10px 0 12px;
  width: 33px;
  border: 1px solid #b5b8bb;
  background: #96999e;
}
.view-tools .caret {
  border-width: 5px 3px 0;
}
.view-tools hr {
  width: 23px;
  height: 1px;
  margin: 0;
  border: 0;
  background: #555;
}
.cube {
  fill: #8494ab;
  stroke: #33455a;
}
.cube.light {
  fill: #cfe6fb;
}
.cube text {
  fill: #222;
  stroke: none;
  font-size: 9px;
}
.grip {
  position: absolute;
  background: #5f6b78;
}
.grip.left {
  top: 225px;
  right: -4px;
  width: 4px;
  height: 100px;
}
.grip.right {
  top: 225px;
  right: -4px;
  width: 4px;
  height: 100px;
}
.grip.bottom {
  bottom: 288px;
  left: 516px;
  width: 100px;
  height: 4px;
}

/* beam table */
.beam-panel {
  position: relative;
  flex: none;
  height: 288px;
  background: #fff;
}
.beam-panel h2, .beam-panel .tools-row {
  background: #efefef;
}
.beam-view {
  flex: 1;
  min-width: 0;
  overflow: hidden;
}
.beam-panel .vbar {
  flex: none;
  width: 15px;
}
.beam-panel .vbar .thumb {
  height: 161px;
  margin-top: 28px;
}
.beam-table {
  width: 1186px;
}
.beam-table th {
  height: 17px;
  line-height: 15px;
}
.beam-table tr:first-child th {
  height: 18px;
}
.beam-table th.cut {
  text-align: left;
}
.beam-table td {
  padding-left: 3px;
}
.beam-table .num {
  padding: 0;
  background: #efefef;
  color: #333;
  text-align: center;
}
.beam-table .num.current {
  background: #80bcfb;
  color: #fff;
  font-weight: bold;
}
.beam-table .place {
  line-height: 17px;
  white-space: normal;
}
.beam-table .focus {
  outline: 2px solid #66a8ea;
  outline-offset: -1px;
}
.rebar {
  display: flex;
  align-items: center;
  color: #333;
}
.rebar svg {
  margin-bottom: 4px;
}
.hbar {
  display: flex;
  align-items: center;
  height: 19px;
  padding: 8px 18px 0 3px;
}
.hbar .left, .hbar .right {
  border: 4px solid transparent;
}
.hbar .left {
  border-left: 0;
  border-right-color: #222;
}
.hbar .right {
  margin-left: auto;
  border-right: 0;
  border-left-color: #222;
}
.hbar .thumb {
  width: 37%;
  height: 8px;
  margin-left: 40px;
}
.notes {
  position: absolute;
  top: 0;
  left: 0;
  width: 100%;
  height: 100%;
  fill: #fd3838;
  pointer-events: none;
}

/* display settings */
.display {
  display: flex;
  flex-direction: column;
}
.card-tabs {
  display: flex;
  align-items: flex-end;
  gap: 2px;
  height: 30px;
  padding-left: 2px;
  border-bottom: 1px solid #c3c5c9;
}
.card-tabs button {
  height: 22px;
  padding: 0 6px;
  border-radius: 3px 3px 0 0;
  background: #e0e0e0;
  color: #555;
}
.card-tabs .active {
  height: 25px;
  padding: 0 5px;
  border: 1px solid #c3c5c9;
  border-bottom: 0;
  background: #fff;
  color: #2a80e8;
}
.display .scroll-box {
  margin: 2px 2px 0 1px;
  border: 1px solid #c3c5c9;
}
.display-table { width: 261px; }
.display-table th { height: 21px; }
.w-show { width: 63px; }
.display-table .focus {
  outline: 2px solid #808080;
  outline-offset: -1px;
}
.display .thumb {
  height: 218px;
  margin-top: 122px;
}
.foot {
  display: flex;
  justify-content: flex-end;
  padding: 6px 7px 0 0;
}
.foot button {
  height: 26px;
  padding: 0 8px;
  border: 1px solid #b9c3d8;
  border-radius: 3px;
  background: #f8f9fb;
}

/* status bar */
.status {
  flex: none;
  display: flex;
  align-items: center;
  height: 31px;
  padding: 2px 13px 0 2px;
  background: #dedee0;
  color: #222;
  white-space: nowrap;
}
.s-pos { width: 263px; }
.s-floor, .s-lv { width: 40px; }
.s-h { width: 43px; }
.s-r { width: 93px; }
.s-n { width: 103px; }
.s-hide { width: 36px; }
.s-zero { width: 67px; }
.snap {
  display: flex;
  gap: 3px;
}
.snap button {
  gap: 5px;
  height: 25px;
  padding: 0 4px;
  border: 1px solid #9a9a9c;
  background: #cfcfd1;
}
.snap button.blue {
  border-color: #2a8cf0;
  background: #fff;
}
.snap .dim {
  margin-left: 3px;
}
.snap .caret {
  border-top-color: #777;
}
.hint {
  margin-left: 6px;
}
.fps {
  margin-left: auto;
}
.taskbar {
  flex: none;
  display: flex;
  justify-content: flex-end;
  height: 8px;
  padding: 0 72px 0 539px;
  overflow: hidden;
  border-top: 1px solid #fff;
  background: #17110e;
  color: #fff;
  line-height: 16px;
}
.task {
  width: 48px;
  margin-right: auto;
  background: #4a4745;
}
```
FILE: script.js
```js
const icon = (name, w, h) => `<svg width="${w}" height="${h}"><use href="#${name}"/></svg>`;

// navigation tree
const nav = [
  ["常用构件类型"], ["轴线"], ["柱"], ["墙"], ["门窗洞"],
  ["梁", [["梁(L)", "i-beam"], ["连梁(G)", "i-link"], ["圈梁(E)", "i-ring"]]],
  ["板", [["现浇板(B)", "i-slab"], ["螺旋板(B)", "i-spiral"], ["柱帽(V)", "i-cap"], ["板洞(N)", "i-hole"],
    ["板受力筋(S)", "i-rebar"], ["板负筋(F)", "i-neg"], ["楼层板带(H)", "i-band"]]],
  ["空心楼盖"], ["楼梯"], ["装修"], ["土方"], ["基础"], ["其它"], ["自定义"],
];
let html = "";
nav.forEach(([name, items]) => {
  html += `<li>${icon(items ? "i-open" : "i-folder", 16, 14)}${name}</li>`;
  (items || []).forEach(([text, id]) => {
    html += `<li class="leaf${text === "梁(L)" ? " current" : ""}">${icon(id, 16, 16)}${text}</li>`;
  });
});
document.getElementById("nav-tree").innerHTML = html;

// drawing list
const drawings = [
  ["基础层 (-1.35~-0.05)", [["基础柱位图", "(基础层)"], ["基础构件图", "(基础层)"]]],
  ["首层 (-0.05~3.5)", [["二层~五层柱定位平面...", "(首层)"], ["首层梁", "(首层)"], ["E-1 1#学生宿舍首层板...", "(首层)"]]],
  ["第2层 (3.5~7.1)", [["二层~五层柱定位平面图", "(第2层,..."], ["二层板配筋平面图", "(第2层)"]]],
  ["第3层 (7.1~10.7)", [["二层~五层柱定位平面图", "(第2层,..."], ["三、四层板配筋平面图", "(第3层,..."]]],
];
html = "";
drawings.forEach(([floor, items]) => {
  html += `<tr><td colspan="3"><div class="cell"><button class="toggle" aria-label="折叠"></button>${floor}</div></td></tr>`;
  items.forEach(([name, at], i) => {
    const last = i === items.length - 1 ? " last" : "";
    html += `<tr class="${name === "首层梁" ? "current" : ""}"><td><div class="cell"><i class="branch${last}"></i>${name}</div></td>` +
      `<td class="mid">${icon("i-lock", 12, 14)}</td><td>${at}</td></tr>`;
  });
});
document.getElementById("drawing-rows").innerHTML = html;

// display settings, 1 = shown
const layers = [
  ["", ["门", 1], ["窗", 0], ["门联窗", 1], ["墙洞", 1], ["带形窗", 0], ["带形洞", 1], ["飘窗", 1], ["老虎窗", 1], ["过梁", 1], ["壁龛", 1]],
  [["梁", 1], ["梁", 1], ["连梁", 1], ["圈梁", 1]],
  [["板", 0], ["现浇板", 0], ["螺旋板", 0], ["柱帽", 0], ["板洞", 0], ["板受力筋", 0], ["板负筋", 0], ["楼层板带", 0]],
  [["空心楼盖", 1], ["空心楼盖板", 1], ["空心楼盖柱帽", 1], ["主肋梁", 1], ["成孔芯模", 1], ["次肋梁", 1],
    ["次肋梁下部筋", 1], ["次肋梁支座筋", 1], ["空挡", 1], ["空心楼盖板受...", 1]],
  [["楼梯", 1], ["楼梯", 1]],
];
html = "";
layers.forEach((group, g) => {
  group.forEach((row, i) => {
    if (!row) return;
    const [name, on] = row;
    const last = i === group.length - 1 && g < layers.length - 1 ? " last" : "";
    const lead = i ? `<i class="branch${last}"></i>` : `<button class="toggle" aria-label="折叠"></button>`;
    html += `<tr><td><div class="cell"><i class="rail"></i>${lead}${name}</div></td>` +
      `<td class="mid${name === "板" ? " focus" : ""}"><input type="checkbox" aria-label="显示图元 ${name}"${on ? " checked" : ""}></td>` +
      `<td class="mid"><input type="checkbox" aria-label="显示名称 ${name}"></td></tr>`;
  });
});
document.getElementById("display-rows").innerHTML = html;

// beam spans: no, A3, A4, length, left support bars
const widths = [7, 61, 61, 61, 61, 41, 41, 41, 41, 101, 81, 81, 82, 81, 81, 81, 81, 102];
document.getElementById("beam-cols").innerHTML = widths.map(w => `<col style="width:${w}px">`).join("");
const spans = [
  [2, "(175)", "", "(7000)", "5", "16 3/2"], [3, "(175)", "", "(7000)", "4", "16"],
  [4, "(175)", "", "(7000)", "4", "16"], [5, "(175)", "", "(7000)", "4", "16"],
  [6, "(175)", "", "(7000)", "4", "16"], [7, "(175)", "", "(7000)", "4", "16"],
  [8, "(175)", "", "(7050)", "4", "16"], [9, "(124)", "(376)", "(2699)", "3", "16"],
];
document.getElementById("beam-rows").innerHTML = spans.map(([no, a3, a4, len, count, size], i) =>
  `<tr><td class="num${no === 9 ? " current" : ""}">${no}</td>` +
  (i ? "" : `<td rowspan="8" class="place">&lt;1-0,1-0;<br>1-0,1-0&gt;</td><td rowspan="8">1-KL6</td>`) +
  `<td>${no}</td><td>-0.05</td><td></td><td>(175)</td><td>${a3}</td><td>${a4}</td><td>${len}</td><td>(250*600)</td><td>50</td>` +
  `<td class="${no === 9 ? "focus" : ""}"></td><td><div class="rebar">${count}${icon("i-bar", 12, 12)}${size}</div></td>` +
  `<td></td><td></td><td></td><td></td></tr>`).join("");
```
